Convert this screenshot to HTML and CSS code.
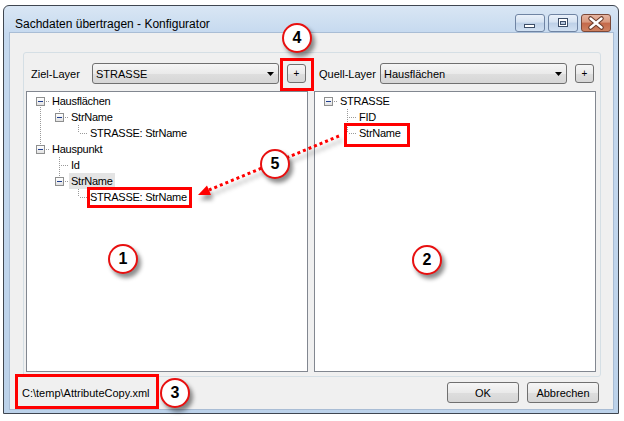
FILE: index.html
```html
<!DOCTYPE html>
<html>
<head>
<meta charset="utf-8">
<title>Sachdaten übertragen - Konfigurator</title>
<link rel="stylesheet" href="styles.css">
</head>
<body>
<div class="window">
  <div class="titlebar">
    <span class="title">Sachdaten übertragen - Konfigurator</span>
    <div class="caps">
      <span class="cbtn"><svg width="28" height="16" viewBox="0 0 28 16"><rect x="8.5" y="9.5" width="10" height="3" fill="#fff" stroke="#3c4e68"/></svg></span>
      <span class="cbtn"><svg width="28" height="16" viewBox="0 0 28 16"><rect x="9.5" y="3.5" width="9" height="8" fill="#fff" stroke="#3c4e68"/><rect x="11.5" y="6.5" width="5" height="3" fill="#b6c6dc" stroke="#3c4e68"/></svg></span>
      <span class="cbtn close"><svg width="28" height="16" viewBox="0 0 28 16"><path d="M8.5 3.5L19.5 12.5M19.5 3.5L8.5 12.5" stroke="#6a3a2a" stroke-width="4.5" stroke-linecap="round"/><path d="M8.5 3.5L19.5 12.5M19.5 3.5L8.5 12.5" stroke="#fff" stroke-width="2.4" stroke-linecap="round"/></svg></span>
    </div>
  </div>
  <div class="client">
    <div class="panel">
      <div class="col">
        <div class="hdr">
          <span class="lbl">Ziel-Layer</span>
          <div class="combo"><span>STRASSE</span><svg class="dd" width="7" height="4" viewBox="0 0 7 4"><path d="M0 0H7L3.5 4Z" fill="#000"/></svg></div>
          <button class="plus">+</button>
        </div>
        <div class="tree">
          <div class="row"><span class="c rootdn"><i class="exp"></i></span><span class="t">Hausflächen</span></div>
          <div class="row"><span class="c full"></span><span class="c elb"><i class="exp"></i></span><span class="t">StrName</span></div>
          <div class="row"><span class="c full"></span><span class="c"></span><span class="c elb"></span><span class="t">STRASSE: StrName</span></div>
          <div class="row"><span class="c elb"><i class="exp"></i></span><span class="t">Hauspunkt</span></div>
          <div class="row"><span class="c"></span><span class="c tee"></span><span class="t">Id</span></div>
          <div class="row"><span class="c"></span><span class="c elb"><i class="exp"></i></span><span class="t sel">StrName</span></div>
          <div class="row"><span class="c"></span><span class="c"></span><span class="c elb"></span><span class="t">STRASSE: StrName</span></div>
        </div>
      </div>
      <div class="col">
        <div class="hdr">
          <span class="lbl">Quell-Layer</span>
          <div class="combo"><span>Hausflächen</span><svg class="dd" width="7" height="4" viewBox="0 0 7 4"><path d="M0 0H7L3.5 4Z" fill="#000"/></svg></div>
          <button class="plus">+</button>
        </div>
        <div class="tree">
          <div class="row"><span class="c h"><i class="exp"></i></span><span class="t">STRASSE</span></div>
          <div class="row"><span class="c"></span><span class="c tee"></span><span class="t">FID</span></div>
          <div class="row"><span class="c"></span><span class="c elb"></span><span class="t">StrName</span></div>
        </div>
      </div>
    </div>
    <div class="footer">
      <span class="path">C:\temp\AttributeCopy.xml</span>
      <div class="btns">
        <button class="btn">OK</button>
        <button class="btn">Abbrechen</button>
      </div>
    </div>
  </div>
</div>

<span class="redbox rb-plus"></span>
<span class="redbox rb-src"></span>
<span class="redbox rb-dst"></span>
<span class="redbox rb-path"></span>

<svg class="arrow-ov" width="624" height="421" viewBox="0 0 624 421">
  <defs>
    <filter id="sh" x="-20%" y="-40%" width="140%" height="200%">
      <feDropShadow dx="2" dy="5" stdDeviation="2" flood-color="#000" flood-opacity="0.4"/>
    </filter>
  </defs>
  <g filter="url(#sh)">
    <line x1="339" y1="136" x2="209" y2="190" stroke="#f00" stroke-width="3" stroke-dasharray="3 3"/>
    <polygon points="198,195 211,195 207,185.5" fill="#f00"/>
  </g>
</svg>

<span class="badge b1">1</span>
<span class="badge b2">2</span>
<span class="badge b3">3</span>
<span class="badge b4">4</span>
<span class="badge b5">5</span>
</body>
</html>
```

FILE: styles.css
```css
html, body {
  margin: 0;
}
body {
  padding: 5px 0 0 3px;
  width: 624px;
  height: 421px;
  box-sizing: border-box;
  overflow: hidden;
  background: #fff;
  font-family: "Liberation Sans", Arial, sans-serif;
  font-size: 11px;
  color: #000;
}

.window {
  box-sizing: border-box;
  width: 616px;
  height: 409px;
  border: 1px solid #3f4650;
  border-radius: 6px 6px 0 0;
  background: linear-gradient(#d9e6f4, #c5d9ef 28px, #bcd2ea);
  padding: 0 5px 4px 6px;
  display: flex;
  flex-direction: column;
}

.titlebar {
  height: 27px;
  display: flex;
  justify-content: space-between;
  align-items: flex-start;
  padding-left: 5px;
}
.title {
  margin-top: 11px;
  font-size: 12px;
  line-height: 14px;
  color: #000;
}
.caps {
  display: flex;
  gap: 3px;
  margin-top: 8px;
  margin-right: 2px;
}
.cbtn {
  box-sizing: border-box;
  width: 30px;
  height: 18px;
  border: 1px solid #6f84a3;
  border-radius: 3px;
  background: linear-gradient(#eaf1fa, #d5e2f1 45%, #bdd0e7 50%, #d0e0f2);
  display: flex;
}
.cbtn.close {
  border-color: #7a4838;
  background: linear-gradient(#e6b6a2, #d8977c 45%, #c4694a 50%, #cf8160);
}

.client {
  box-sizing: border-box;
  height: 376px;
  background: #f0f0f0;
  box-shadow: 0 0 0 1px #a9bdd5;
  padding: 19px 12px 6px 13px;
  display: flex;
  flex-direction: column;
}

.panel {
  box-sizing: border-box;
  height: 325px;
  border: 1px solid #d5dfe5;
  border-radius: 3px;
  padding: 10px 4px 4px 2px;
  display: grid;
  grid-template-columns: 282px 282px;
  column-gap: 6px;
}
.col {
  display: flex;
  flex-direction: column;
  gap: 7px;
}
.hdr {
  display: flex;
  align-items: center;
  height: 21px;
}
.lbl {
  box-sizing: border-box;
  width: 66px;
  padding-left: 5px;
  white-space: nowrap;
}
.combo {
  box-sizing: border-box;
  width: 187px;
  height: 21px;
  border: 1px solid #707070;
  border-radius: 3px;
  background: linear-gradient(#f6f6f6, #eaeaea 50%, #dedede 51%, #d6d6d6);
  display: flex;
  align-items: center;
  padding: 0 4px 0 3px;
}
.combo .dd {
  margin-left: auto;
}
.plus {
  box-sizing: border-box;
  margin-left: 8px;
  width: 19px;
  height: 19px;
  padding: 0;
  border: 1px solid #707070;
  border-radius: 3px;
  background: linear-gradient(#f6f6f6, #eaeaea 50%, #dedede 51%, #d6d6d6);
  font-family: inherit;
  font-size: 10px;
  line-height: 15px;
  color: #000;
}

.tree {
  box-sizing: border-box;
  height: 281px;
  border: 1px solid #828790;
  background: #fff;
  padding: 1px 0 0 4px;
}
.row {
  display: flex;
  height: 16px;
  align-items: flex-start;
}
.c {
  flex: none;
  width: 19px;
  height: 16px;
  display: flex;
  align-items: flex-start;
}
.c.full {
  background: repeating-linear-gradient(to bottom, #9a9a9a 0 1px, transparent 1px 2px) 9px 0 / 1px 16px no-repeat;
}
.c.tee {
  background:
    repeating-linear-gradient(to bottom, #9a9a9a 0 1px, transparent 1px 2px) 9px 0 / 1px 16px no-repeat,
    repeating-linear-gradient(to right, #9a9a9a 0 1px, transparent 1px 2px) 11px 8px / 8px 1px no-repeat;
}
.c.elb {
  background:
    repeating-linear-gradient(to bottom, #9a9a9a 0 1px, transparent 1px 2px) 9px 0 / 1px 8px no-repeat,
    repeating-linear-gradient(to right, #9a9a9a 0 1px, transparent 1px 2px) 11px 8px / 8px 1px no-repeat;
}
.c.rootdn {
  background:
    repeating-linear-gradient(to bottom, #9a9a9a 0 1px, transparent 1px 2px) 9px 8px / 1px 8px no-repeat,
    repeating-linear-gradient(to right, #9a9a9a 0 1px, transparent 1px 2px) 11px 8px / 8px 1px no-repeat;
}
.c.h {
  background: repeating-linear-gradient(to right, #9a9a9a 0 1px, transparent 1px 2px) 11px 8px / 8px 1px no-repeat;
}
.exp {
  box-sizing: border-box;
  width: 9px;
  height: 9px;
  margin: 4px 0 0 5px;
  border: 1px solid #8e8f8f;
  background: linear-gradient(#ffffff, #e2e2e2);
  display: flex;
  align-items: center;
  justify-content: center;
}
.exp::after {
  content: "";
  width: 5px;
  height: 1px;
  background: #1e3d8f;
}
.t {
  line-height: 16px;
  height: 16px;
  padding: 0 2px;
  letter-spacing: -0.25px;
  white-space: nowrap;
}
.t.sel {
  background: #e4e4e4;
}

.footer {
  display: flex;
  align-items: center;
  justify-content: space-between;
  margin-top: 5px;
  height: 21px;
}
.path {
  margin-left: -1px;
}
.btns {
  display: flex;
  gap: 8px;
  margin-right: 2px;
}
.btn {
  box-sizing: border-box;
  width: 72px;
  height: 21px;
  padding: 0;
  border: 1px solid #707070;
  border-radius: 3px;
  background: linear-gradient(#f6f6f6, #eaeaea 50%, #dedede 51%, #d6d6d6);
  font-family: inherit;
  font-size: 11px;
  color: #000;
}

/* annotation overlays */
.redbox {
  position: absolute;
  box-sizing: border-box;
  border: 3px solid #f00;
}
.rb-plus { left: 280px; top: 58px; width: 34px; height: 33px; }
.rb-src  { left: 344px; top: 123px; width: 66px; height: 24px; }
.rb-dst  { left: 87px;  top: 187px; width: 105px; height: 21px; }
.rb-path { left: 15px;  top: 374px; width: 144px; height: 35px; }

.arrow-ov {
  position: absolute;
  left: 0;
  top: 0;
  pointer-events: none;
}

.badge {
  position: absolute;
  box-sizing: border-box;
  width: 30px;
  height: 30px;
  border: 2px solid #e81010;
  border-radius: 50%;
  background: #fff;
  box-shadow: 3px 4px 4px rgba(0, 0, 0, 0.45);
  display: flex;
  align-items: center;
  justify-content: center;
  font-family: "Liberation Sans", Arial, sans-serif;
  font-weight: bold;
  font-size: 16px;
  color: #000;
}
.b1 { left: 108px; top: 244px; }
.b2 { left: 412px; top: 245px; }
.b3 { left: 160px; top: 378px; }
.b4 { left: 282px; top: 23px; }
.b5 { left: 260px; top: 149px; }
```
